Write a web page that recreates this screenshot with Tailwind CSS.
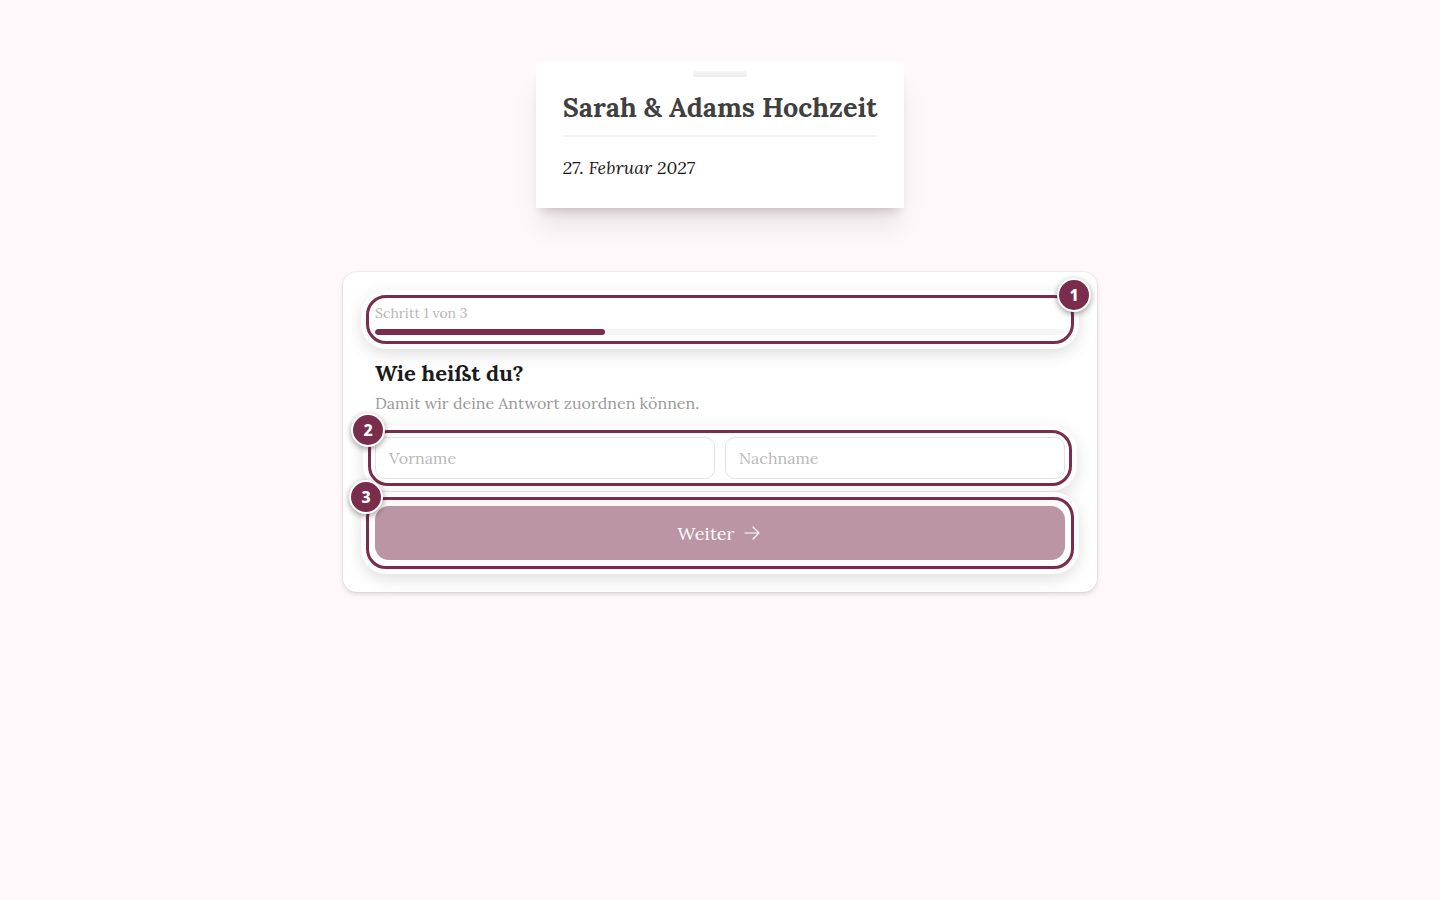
<!DOCTYPE html>
<html lang="de">
<head>
  <meta charset="UTF-8">
  <meta name="viewport" content="width=device-width, initial-scale=1">
  <title>Sarah &amp; Adams Hochzeit</title>
  <script src="https://cdn.jsdelivr.net/npm/@tailwindcss/browser@4"></script>
</head>
<body class="min-h-screen bg-[#fef8fa] px-4 pt-[62px] pb-16 font-['Lora','Liberation_Serif',serif] text-[#1c1b1b]">

  <!-- Header -->
  <header class="relative mx-auto w-fit bg-white px-[27px] pt-[26px] pb-[25px] shadow-[0_20px_25px_-5px_rgba(40,20,30,0.1),0_8px_10px_-6px_rgba(40,20,30,0.2)]">
    <div class="absolute top-[9px] left-1/2 h-[6px] w-[54px] -translate-x-1/2 rounded-xs bg-linear-to-b from-[#f6f6f6] to-[#ececec]"></div>
    <h1 class="border-b-2 border-[#f4f4f4] pb-[9px] text-[27px] leading-[38px] font-bold text-[#404040]">Sarah &amp; Adams Hochzeit</h1>
    <p class="mt-4 text-[18px] leading-[30px] italic">27. Februar 2027</p>
  </header>

  <!-- Form -->
  <main class="mx-auto mt-16 max-w-[754px] rounded-[14px] bg-white p-8 shadow-[0_0_0_1px_rgba(0,0,0,0.03),0_2px_5px_rgba(0,0,0,0.14)]">
    <form>
      <div class="relative">
        <label for="schritt" class="block text-[14px] leading-[18px] text-[#b5b5b5]">Schritt 1 von 3</label>
        <progress id="schritt" value="1" max="3" class="mt-[7px] block h-[6px] w-full appearance-none overflow-hidden rounded-full [&::-webkit-progress-bar]:bg-[#f5f5f5] [&::-webkit-progress-value]:rounded-full [&::-webkit-progress-value]:bg-[#7a2c4d]"></progress>
        <div class="pointer-events-none absolute -inset-[9px] rounded-[20px] border-3 border-[#7a2c4d] shadow-[0_0_0_5px_rgba(255,255,255,0.9),0_5px_18px_3px_rgba(0,0,0,0.16)]"></div>
        <span class="absolute -top-[26px] -right-[26px] flex size-[34px] items-center justify-center rounded-full border-2 border-white bg-[#7a2c4d] font-['Noto_Sans',sans-serif] text-base font-extrabold text-white shadow-[0_2px_6px_rgba(0,0,0,0.4)]">1</span>
      </div>

      <h2 class="mt-[22px] text-[22px] leading-8 font-bold">Wie heißt du?</h2>
      <p class="mt-[2px] text-[16px] leading-6 text-[#999]">Damit wir deine Antwort zuordnen können.</p>

      <div class="relative mt-[22px] grid grid-cols-2 gap-[10px]">
        <input type="text" aria-label="Vorname" placeholder="Vorname" class="h-[42px] min-w-0 rounded-[10px] border border-[#e2e2e2] px-[13px] text-[16px] placeholder:text-[#b8b8b8]">
        <input type="text" aria-label="Nachname" placeholder="Nachname" class="h-[42px] min-w-0 rounded-[10px] border border-[#e2e2e2] px-[13px] text-[16px] placeholder:text-[#b8b8b8]">
        <div class="pointer-events-none absolute -inset-[7px] rounded-[20px] border-3 border-[#7a2c4d] shadow-[0_0_0_5px_rgba(255,255,255,0.9),0_5px_18px_3px_rgba(0,0,0,0.16)]"></div>
        <span class="absolute -top-6 -left-6 flex size-[34px] items-center justify-center rounded-full border-2 border-white bg-[#7a2c4d] font-['Noto_Sans',sans-serif] text-base font-extrabold text-white shadow-[0_2px_6px_rgba(0,0,0,0.4)]">2</span>
      </div>

      <div class="relative mt-[27px]">
        <button type="submit" class="flex h-[54px] w-full items-center justify-center gap-2 rounded-[14px] bg-[#bb95a3] text-[18px] text-white">
          Weiter
          <svg class="size-5" viewBox="0 0 20 20" fill="none" stroke="currentColor" stroke-width="1.2" stroke-linecap="round" stroke-linejoin="round">
            <path d="M3 10h14M11 4l6 6-6 6"/>
          </svg>
        </button>
        <div class="pointer-events-none absolute -inset-[9px] rounded-[20px] border-3 border-[#7a2c4d] shadow-[0_0_0_5px_rgba(255,255,255,0.9),0_5px_18px_3px_rgba(0,0,0,0.16)]"></div>
        <span class="absolute -top-[26px] -left-[26px] flex size-[34px] items-center justify-center rounded-full border-2 border-white bg-[#7a2c4d] font-['Noto_Sans',sans-serif] text-base font-extrabold text-white shadow-[0_2px_6px_rgba(0,0,0,0.4)]">3</span>
      </div>
    </form>
  </main>

</body>
</html>
